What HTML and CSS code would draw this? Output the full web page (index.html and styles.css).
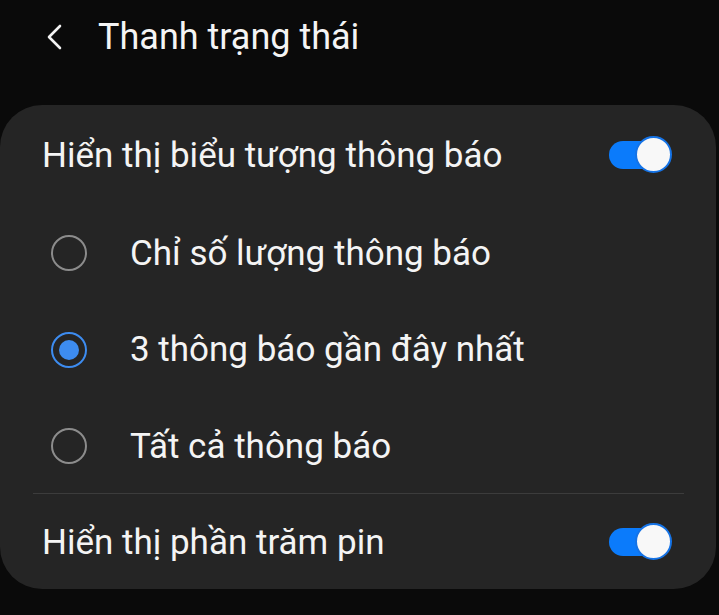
FILE: index.html
```html
<!DOCTYPE html>
<html lang="vi">
  <head>
    <meta charset="UTF-8" />
    <meta name="viewport" content="width=device-width, initial-scale=1.0" />
    <title>Thanh trạng thái</title>
    <link rel="stylesheet" href="styles.css">
  </head>
  <body>
    <div class="header">
      <svg class="back" width="20" height="28" viewBox="0 0 20 28">
        <path d="M15 3 L4 14 L15 25" fill="none" stroke="#f2f2f2" stroke-width="2.6" stroke-linecap="round" stroke-linejoin="round" />
      </svg>
      <h1>Thanh trạng thái</h1>
    </div>

    <div class="card">
      <div class="row first">
        <span class="label">Hiển thị biểu tượng thông báo</span>
        <span class="switch on"><span class="thumb"></span></span>
      </div>

      <div class="option">
        <span class="radio"></span>
        <span class="label">Chỉ số lượng thông báo</span>
      </div>
      <div class="option">
        <span class="radio checked"></span>
        <span class="label">3 thông báo gần đây nhất</span>
      </div>
      <div class="option">
        <span class="radio"></span>
        <span class="label">Tất cả thông báo</span>
      </div>

      <div class="divider"></div>

      <div class="row last">
        <span class="label">Hiển thị phần trăm pin</span>
        <span class="switch on"><span class="thumb"></span></span>
      </div>
    </div>
  </body>
</html>
```

FILE: styles.css
```css
body {
  margin: 0;
  background-color: #0a0a0a;
  color: #f4f4f4;
  font-family: Roboto, "Noto Sans", sans-serif;
}
.header {
  display: flex;
  align-items: center;
  height: 74px;
  padding-left: 45px;
}
.back {
  margin-right: 33px;
}
h1 {
  margin: 0;
  font-size: 36px;
  font-weight: 400;
}
.card {
  margin-top: 31px;
  width: 716px;
  height: 484px;
  box-sizing: border-box;
  background-color: #252525;
  border-radius: 42px;
  display: flex;
  flex-direction: column;
}
.label {
  font-size: 35px;
}
.row {
  display: flex;
  align-items: center;
  justify-content: space-between;
  padding-left: 42px;
  padding-right: 53px;
}
.row.first {
  height: 100px;
}
.row.last {
  flex: 1;
}
.option {
  display: flex;
  align-items: center;
  height: 96.5px;
  padding-left: 51px;
}
.radio {
  width: 32px;
  height: 32px;
  border: 2px solid #8c8c8c;
  border-radius: 50%;
  margin-right: 43px;
  display: flex;
  align-items: center;
  justify-content: center;
}
.radio.checked {
  border-color: #3d8cf0;
}
.radio.checked::after {
  content: "";
  width: 20px;
  height: 20px;
  border-radius: 50%;
  background-color: #3d8cf0;
}
.divider {
  height: 1px;
  background-color: #3c3c3c;
  margin: -2px 32px 2px 33px;
}
.switch {
  position: relative;
  width: 54px;
  height: 28px;
  border-radius: 14px;
  background-color: #0b7bfb;
}
.switch .thumb {
  position: absolute;
  right: -9px;
  top: -5px;
  width: 33px;
  height: 33px;
  border-radius: 50%;
  background-color: #f8f8f8;
  border: 2px solid #1573e6;
}
```
